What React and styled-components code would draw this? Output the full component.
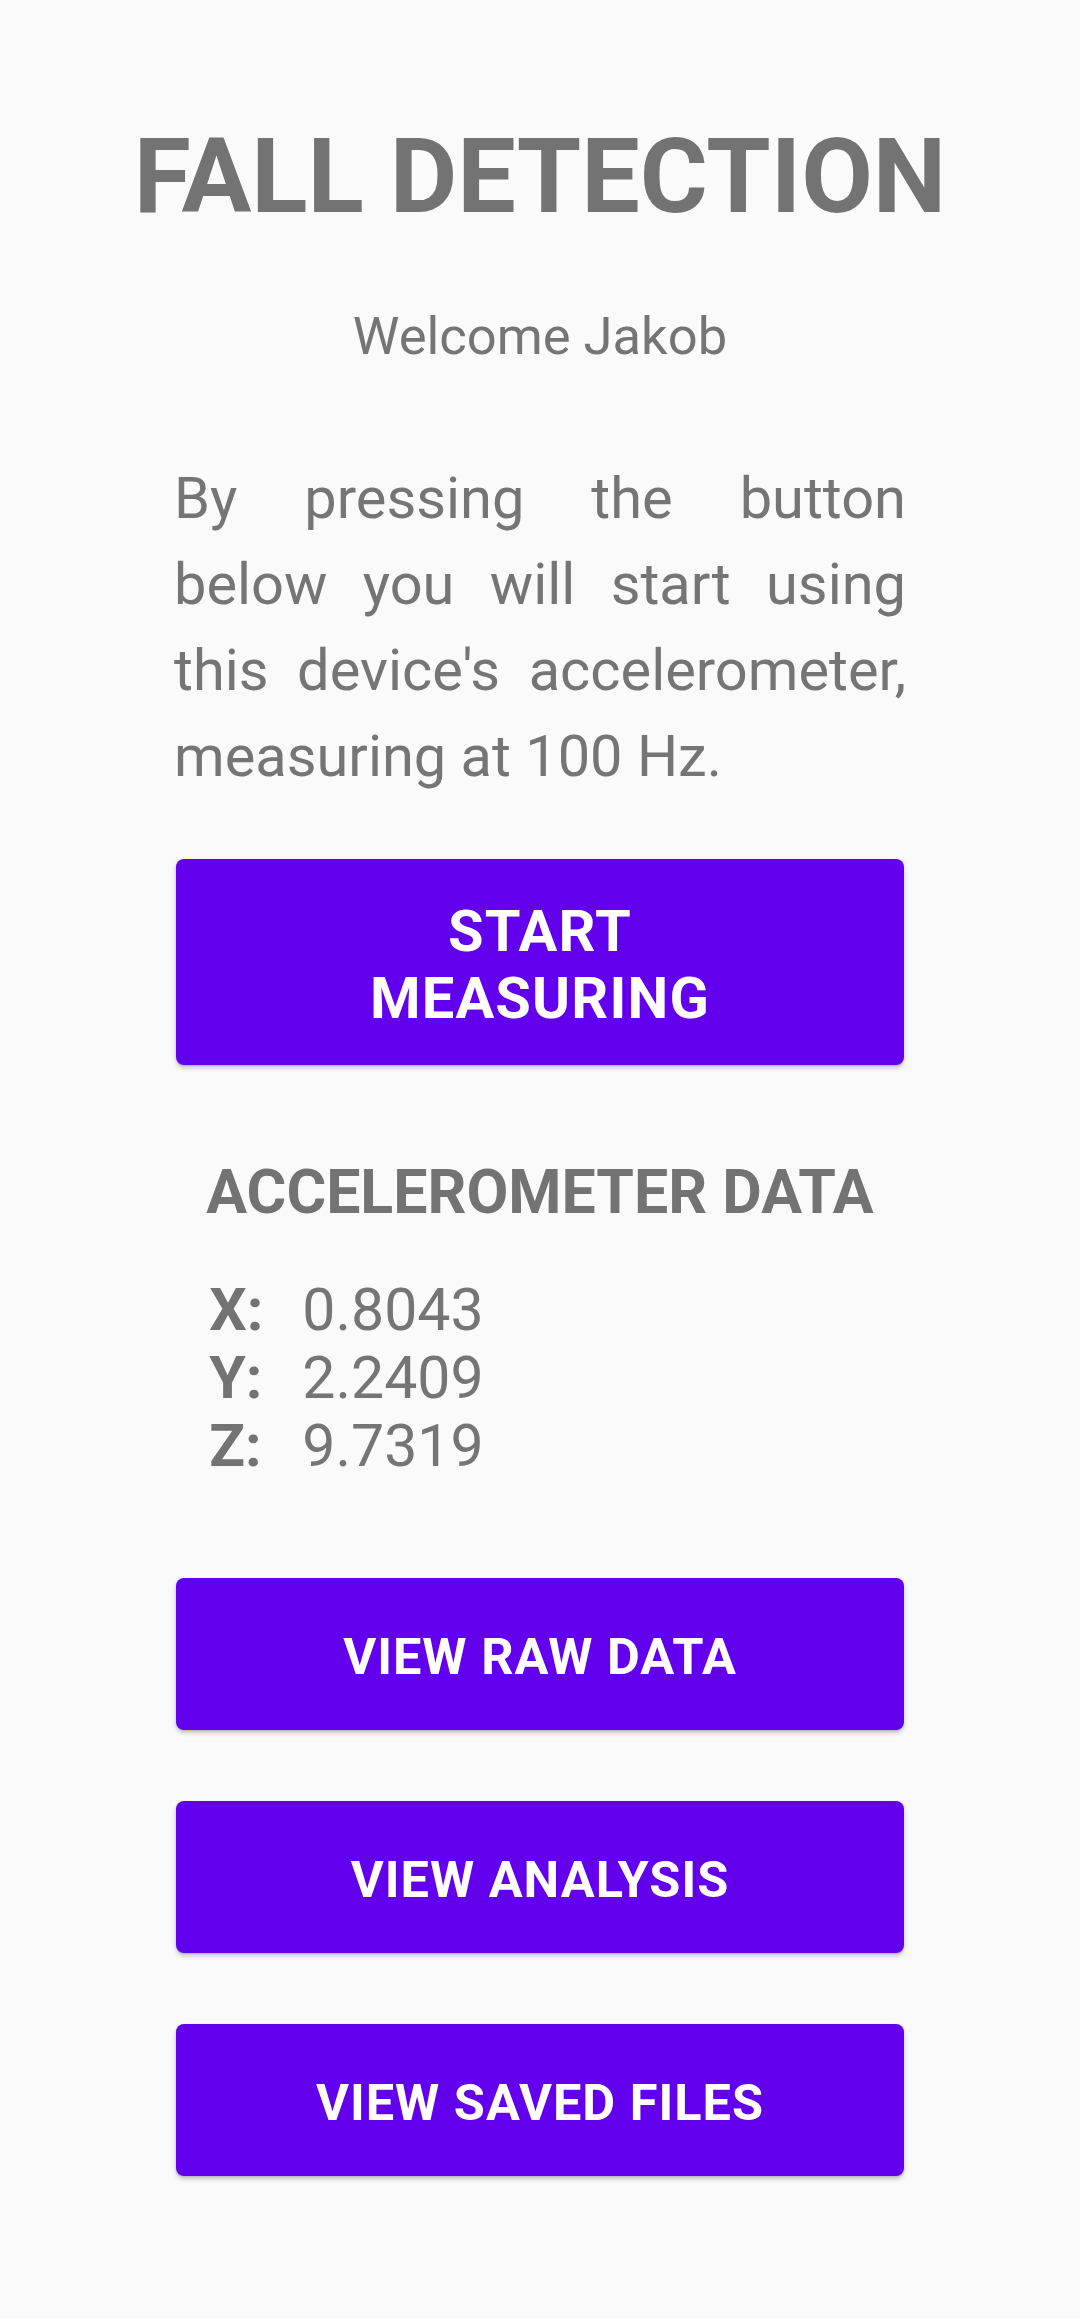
import styled, { createGlobalStyle } from "styled-components";

const GlobalStyle = createGlobalStyle`
  html, body {
    margin: 0;
    padding: 0;
    background-color: #fafafa;
  }

  body {
    font-family: Roboto, "Liberation Sans", sans-serif;
    color: #757575;
  }
`;

const Screen = styled.main`
  width: 1080px;
  min-height: 2319px;
  display: flex;
  flex-direction: column;
  align-items: center;
  padding-top: 116px;
  box-sizing: border-box;
  background-color: #fafafa;
`;

const Title = styled.h1`
  margin: 0;
  font-size: 104px;
  font-weight: 700;
  line-height: 1.172;
  color: #737373;
`;

const Welcome = styled.p`
  margin: 68px 0 0;
  font-size: 52.5px;
  line-height: 1.172;
`;

const Intro = styled.p`
  width: 732px;
  margin: 88px 0 0;
  font-size: 57.75px;
  line-height: 86px;
  text-align: justify;
`;

const Button = styled.button`
  width: 728px;
  min-height: ${(p) => (p.$tall ? "206px" : "152px")};
  margin-top: ${(p) => p.$gap}px;
  padding: 6px 0 0;
  box-sizing: border-box;
  display: flex;
  justify-content: center;
  align-items: center;
  border: none;
  border-radius: 8px;
  background-color: #6200ee;
  color: #ffffff;
  font-family: Roboto, "Liberation Sans", sans-serif;
  font-size: ${(p) => (p.$tall ? "57.75px" : "50.5px")};
  font-weight: 700;
  line-height: ${(p) => (p.$tall ? "67.7px" : "1.172")};
  letter-spacing: 0.02em;
  text-transform: uppercase;
  box-shadow: 0 3px 5px rgba(0, 0, 0, 0.2), 0 1px 2px rgba(0, 0, 0, 0.14);
  cursor: pointer;
`;

const ButtonLabel = styled.span`
  max-width: 440px;
  text-align: center;
`;

const DataSection = styled.section`
  margin-top: 93px;
  display: flex;
  flex-direction: column;
`;

const DataHeading = styled.h2`
  margin: 0;
  font-size: 60.8px;
  font-weight: 700;
  line-height: 70px;
  color: #737373;
`;

const DataTable = styled.div`
  margin-top: 48px;
  padding-left: 3px;
  display: grid;
  grid-template-columns: 93px auto;
  font-size: 59px;
  line-height: 67.7px;
`;

const Axis = styled.span`
  font-weight: 700;
  color: #737373;
`;

const Value = styled.span`
  font-weight: 400;
`;

const readings = [
  { axis: "X", value: "0.8043" },
  { axis: "Y", value: "2.2409" },
  { axis: "Z", value: "9.7319" },
];

function App() {
  return (
    <>
      <GlobalStyle />
      <Screen>
        <Title>FALL DETECTION</Title>
        <Welcome>Welcome Jakob</Welcome>
        <Intro>
          By pressing the button below you will start using this device's
          accelerometer, measuring at 100 Hz.
        </Intro>

        <Button $tall $gap={60}>
          <ButtonLabel>Start Measuring</ButtonLabel>
        </Button>

        <DataSection>
          <DataHeading>ACCELEROMETER DATA</DataHeading>
          <DataTable>
            {readings.flatMap((r) => [
              <Axis key={r.axis}>{r.axis}:</Axis>,
              <Value key={r.axis + "-value"}>{r.value}</Value>,
            ])}
          </DataTable>
        </DataSection>

        <Button $gap={98}>View Raw Data</Button>
        <Button $gap={71}>View Analysis</Button>
        <Button $gap={71}>View Saved Files</Button>
      </Screen>
    </>
  );
}

export default App;
